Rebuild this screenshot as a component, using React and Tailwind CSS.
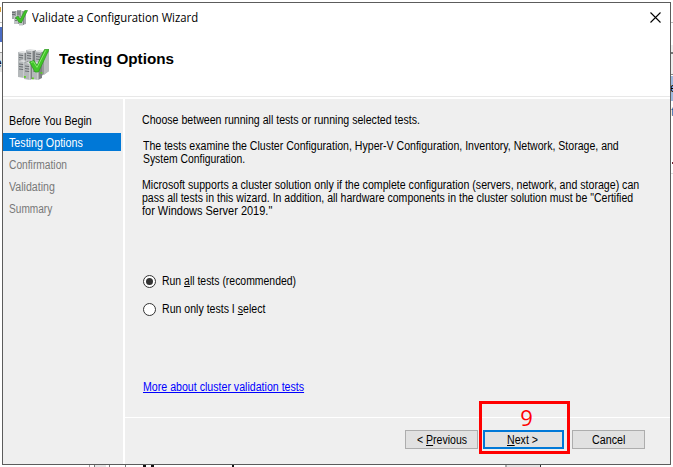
import { useLayoutEffect, useRef, useState } from "react";

// One line of text, condensed or widened so that it spans `width` pixels.
function Line({ width, className = "", children }) {
  const ref = useRef(null);
  const [scale, setScale] = useState(1);
  useLayoutEffect(() => {
    setScale(width / ref.current.offsetWidth);
  }, [width]);
  return (
    <span className={`block ${className}`} style={{ width }}>
      <span ref={ref} className="block w-max origin-left whitespace-pre" style={{ transform: `scaleX(${scale})` }}>
        {children}
      </span>
    </span>
  );
}

function Tower({ x, y, h }) {
  return (
    <g transform={`translate(${x} ${y})`}>
      <path d={`M6 2 L10 1 V${h - 2} L6 ${h}Z`} fill="#7d8183" />
      <path d={`M0 1 L6 2 V${h} L0 ${h - 1}Z`} fill="#b4b8ba" />
      <path d="M0 1 L4 0 L10 1 L6 2Z" fill="#dfe1e2" />
      <path d="M1 4 L5.4 4.6 M1 6.5 L5.4 7.1 M1 9 L5.4 9.6" stroke="#6a6e71" strokeWidth="1" />
      <path d={`M6 2 V${h}`} stroke="#eceeee" strokeWidth=".8" />
    </g>
  );
}

function ServersIcon({ className }) {
  return (
    <svg viewBox="0 0 32 32" className={className}>
      <Tower x={1} y={2} h={14} />
      <Tower x={9} y={0} h={17} />
      <Tower x={18} y={1} h={18} />
      <path d="M23 4 L32 2 V22 L23 28Z" fill="#96999b" />
      <path d="M27 6 L32 3 V22 L27 26Z" fill="#b9bcbd" />
      <Tower x={1} y={11} h={18} />
      <Tower x={7} y={13} h={18} />
      <Tower x={15} y={13} h={18} />
      <rect x="7" y="27" width="1.8" height="1.8" fill="#59cf20" />
      <rect x="15" y="28.5" width="1.8" height="1.8" fill="#59cf20" />
      <rect x="23.5" y="23" width="1.8" height="1.8" fill="#59cf20" />
      <path d="M12.5 13 L17 11.5 L20 16.5 L27.5 .5 L32 .5 L21.5 23 L18 23Z" fill="#41c628" stroke="#2a9a1c" strokeWidth=".7" />
      <path d="M14 13.5 L16.4 12.6 L20 18.4 L28.7 1.4" fill="none" stroke="#86e86c" strokeWidth="1" />
    </svg>
  );
}

function SmallServersIcon({ className }) {
  return (
    <svg viewBox="0 0 16 16" className={className}>
      <path d="M0 1 H4 V9 H0Z M5 0 H9 V9 H5Z M10 1 H14 V14 L10 15Z" fill="#a4a8aa" />
      <path d="M2 6 H6 V14 H2Z M7 7 H11 V15.5 H7Z" fill="#c0c4c6" />
      <path d="M0 2.5 H3 M0 4.5 H3 M5 2 H8 M5 4 H8 M3 8.5 H5 M3 10.5 H5 M8 12.5 H10" stroke="#666b6e" strokeWidth=".9" />
      <path d="M4 1 V6 M9 .5 V7 M6.5 7 V14 M11.5 8 V15" stroke="#7c8082" strokeWidth=".8" />
      <path d="M3.5 7.5 L6 6 L8.3 9 L12.8 .5 L15.5 .5 L9.5 12.5 L7.3 12.5Z" fill="#3fc427" stroke="#2a8f20" strokeWidth=".6" />
    </svg>
  );
}

const steps = [
  { label: "Before You Begin", width: 83, style: "text-black" },
  { label: "Testing Options", width: 74, style: "bg-[#0078d7] text-white" },
  { label: "Confirmation", width: 58, style: "text-[#787878]" },
  { label: "Validating", width: 46, style: "text-[#787878]" },
  { label: "Summary", width: 43, style: "text-[#787878]" },
];

function Radio({ checked, width, children }) {
  return (
    <label className="flex h-[13px] items-center">
      <span className="flex size-[13px] items-center justify-center rounded-full border border-[#333] bg-white">
        {checked && <span className="size-[7px] rounded-full bg-[#333]" />}
      </span>
      <Line width={width} className="ml-[6px]">{children}</Line>
    </label>
  );
}

function Backdrop() {
  return (
    <div className="absolute inset-0 overflow-hidden bg-white">
      <div className="absolute left-0 top-[22px] h-px w-[2px] bg-[#bbb]" />
      <div className="absolute left-0 top-[7px] h-[5px] w-px bg-[#d49b35]" />
      <div className="absolute left-0 top-[27px] h-[15px] w-[2px] bg-[#4a6cc4]" />
      <div className="absolute left-0 top-[52px] h-[20px] w-[2px] border-t border-[#999] bg-[#e6e6e6]" />
      <div className="absolute -left-[5px] top-[57px] text-[12px]">e</div>
      <div className="absolute left-[671px] top-[22px] h-px w-[2px] bg-[#bbb]" />
      <div className="absolute left-[671px] top-[45px] h-[30px] w-[2px] border-b border-[#888] bg-[#eee]" />
      <div className="absolute left-[671px] top-[52px] h-[2px] w-[2px] bg-[#777]" />
      <div className="absolute left-[671px] top-[76px] h-[25px] w-[2px] bg-[#9db9df]" />
      <div className="absolute left-[670px] top-[82px] text-[12px]">e</div>
      <div className="absolute left-[671px] top-[106px] text-[12px] text-[#176b9e]">t</div>
      <div className="absolute left-[672px] top-[162px] size-[2px] bg-[#702030]" />
      <div className="absolute left-[671px] top-[173px] h-px w-[2px] bg-[#ddd]" />
      <div className="absolute left-[89px] top-[465px] h-[2px] w-px bg-[#999]" />
      <div className="absolute left-[94px] top-[465px] h-[2px] w-[12px] border-l border-[#777] bg-[#e5e5e5]" />
      <div className="absolute left-[109px] top-[465px] h-[2px] w-px bg-[#777]" />
      <div className="absolute left-[125px] top-[465px] h-[2px] w-px bg-[#777]" />
      <div className="absolute left-[143px] top-[465px] h-[2px] w-[3px] bg-[#111]" />
      <div className="absolute left-[151px] top-[465px] h-[2px] w-[3px] bg-[#111]" />
      <div className="absolute left-[232px] top-[465px] h-[2px] w-[2px] bg-[#111]" />
      <div className="absolute left-[505px] top-[465px] h-[2px] w-[36px] border-l-2 border-r border-l-[#aaa] border-r-[#333] bg-[#e6e6e6]" />
    </div>
  );
}

export default function App() {
  return (
    <div className="relative h-[467px] w-[673px] overflow-hidden pl-[2px] pt-[2px] font-['Liberation_Sans',sans-serif] text-[12px] leading-[13px] text-black">
      <Backdrop />
      <div className="relative flex h-[463px] w-[669px] flex-col border border-[#5c5c5c] bg-[#efefef]">
        <header className="flex h-[94px] shrink-0 flex-col border-b border-[#e8e8e8] bg-white">
          <div className="flex h-[30px] items-center pl-[9px] pr-[9px]">
            <SmallServersIcon className="size-[16px]" />
            <Line width={166} className="ml-[4px] font-['Open_Sans',sans-serif] leading-[16px]">Validate a Configuration Wizard</Line>
            <svg viewBox="0 0 11 11" className="-mt-[2px] ml-auto size-[11px]">
              <path d="M.5 .5 L10.5 10.5 M10.5 .5 L.5 10.5" stroke="#000" strokeWidth="1.1" />
            </svg>
          </div>
          <div className="flex pl-[14px] pt-[15px]">
            <ServersIcon className="mt-px size-[32px]" />
            <Line width={115} className="ml-[10px] mt-[2px] text-[15px] font-bold leading-[17px]">Testing Options</Line>
          </div>
        </header>

        <div className="flex min-h-0 flex-1 border-t-2 border-white">
          <nav className="flex w-[120px] shrink-0 flex-col gap-[4px] pt-[12px]">
            {steps.map((s) => (
              <div key={s.label} className={`mr-[2px] h-[18px] pl-[6px] pt-[4px] ${s.style}`}>
                <Line width={s.width}>{s.label}</Line>
              </div>
            ))}
          </nav>

          <main className="flex flex-1 flex-col border-l-2 border-white">
            <div className="flex h-[319px] flex-col border-b border-white pl-[17px] pt-[15px]">
              <Line width={278}>Choose between running all tests or running selected tests.</Line>
              <div className="mt-[13px] pl-px">
                <Line width={476}>The tests examine the Cluster Configuration, Hyper-V Configuration, Inventory, Network, Storage, and</Line>
                <Line width={102}>System Configuration.</Line>
              </div>
              <div className="mt-[13px]">
                <Line width={497}>Microsoft supports a cluster solution only if the complete configuration (servers, network, and storage) can</Line>
                <Line width={491}>pass all tests in this wizard. In addition, all hardware components in the cluster solution must be "Certified</Line>
                <Line width={130}>for Windows Server 2019."</Line>
              </div>
              <div className="mt-[57px] flex flex-col gap-[15px] pl-px">
                <Radio checked width={134}>Run <u>a</u>ll tests (recommended)</Radio>
                <Radio width={103}>Run only tests I <u>s</u>elect</Radio>
              </div>
              <a className="ml-px mt-[65px] block text-[#0000ff] underline underline-offset-[1px]">
                <Line width={161}>More about cluster validation tests</Line>
              </a>
            </div>

            <footer className="flex pl-[280px] pt-[12px]">
              <button className="flex h-[19px] w-[73px] items-center justify-center border border-[#adadad] bg-[#e1e1e1]">
                <Line width={50} className="mt-px">{"< "}<u>P</u>revious</Line>
              </button>
              <div className="relative ml-[5px]">
                <button className="flex h-[19px] w-[81px] items-center justify-center border-2 border-[#0078d7] bg-[#e1e1e1]">
                  <Line width={31} className="mr-[2px] mt-px"><u>N</u>ext{" >"}</Line>
                </button>
                <div className="absolute -left-[4px] -top-[29px] flex h-[53px] w-[91px] justify-center border-[3px] border-[#ff0000] pl-[4px] pt-[2px] font-['Open_Sans',sans-serif] text-[22px] leading-[22px] text-[#f00]">9</div>
              </div>
              <button className="ml-[8px] flex h-[19px] w-[73px] items-center justify-center border border-[#adadad] bg-[#e1e1e1]">
                <Line width={33} className="mt-px">Cancel</Line>
              </button>
            </footer>
          </main>
        </div>
      </div>
    </div>
  );
}
